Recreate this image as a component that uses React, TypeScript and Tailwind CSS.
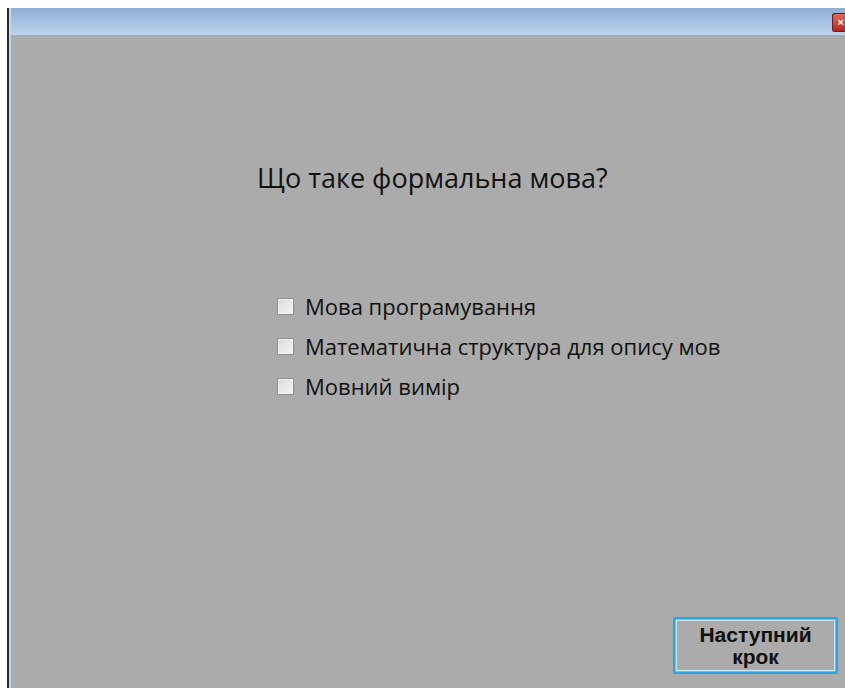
import React from "react";

const options = [
  "Мова програмування",
  "Математична структура для опису мов",
  "Мовний вимір",
];

function CheckBox() {
  return (
    <span className="box-border inline-block w-[17px] h-[17px] border border-[#8e8f8f] bg-gradient-to-br from-[#d8d8d8] to-[#f7f7f7] shadow-[inset_0_0_0_1px_#f2f2f2] shrink-0" />
  );
}

export default function App() {
  return (
    <div
      className="w-[845px] h-[688px] bg-white flex flex-col overflow-hidden"
      style={{ fontFamily: '"Liberation Sans", Arial, sans-serif' }}
    >
      <div className="h-[8px] shrink-0" />
      <div className="flex flex-1 min-h-0">
        <div className="w-[7px] shrink-0" />
        <div className="w-[2px] shrink-0 bg-[#2b2b33]" />
        <div className="flex-1 flex flex-col min-w-0">
          {/* window caption */}
          <div className="h-[27px] shrink-0 relative bg-gradient-to-b from-[#8eafd2] to-[#bcd3ec] border-l-2 border-[#c9daee]">
            <div className="absolute right-0 top-[5px] w-[13px] h-[19px] bg-gradient-to-b from-[#e0685a] to-[#b8241a] border border-r-0 border-[#6e1a14] rounded-l-[3px] flex items-center justify-end pr-[1px]">
              <span className="text-white text-[11px] font-bold leading-none">×</span>
            </div>
          </div>
          {/* form body */}
          <div className="flex-1 flex flex-col bg-[#ababab] border-l-2 border-[#c6d5e8]">
            <div
              className="pl-[246px] pt-[127px] text-[#111] text-[27px] leading-[32px]"
              style={{ fontFamily: '"Open Sans", "Liberation Sans", sans-serif' }}
            >
              Що таке формальна мова?
            </div>
            <div className="pl-[266px] pt-[99px] flex flex-col gap-[14px]">
              {options.map((o) => (
                <label key={o} className="flex items-center gap-[11px] h-[26px]">
                  <CheckBox />
                  <span
                    className="text-[22px] text-[#111] leading-[26px]"
                    style={{ fontFamily: '"Open Sans", "Liberation Sans", sans-serif' }}
                  >
                    {o}
                  </span>
                </label>
              ))}
            </div>
            <div className="mt-auto self-end mr-[7px] mb-[14px]">
              <div className="w-[165px] h-[57px] border-2 border-[#27a6e4] rounded-[2px] p-[1px] bg-[#ababab]">
                <div className="w-full h-full border border-[#cfe8f4] flex items-center justify-center text-center">
                  <span className="font-bold text-[21px] leading-[22px] text-[#111]">
                    Наступний
                    <br />
                    крок
                  </span>
                </div>
              </div>
            </div>
          </div>
        </div>
      </div>
    </div>
  );
}
